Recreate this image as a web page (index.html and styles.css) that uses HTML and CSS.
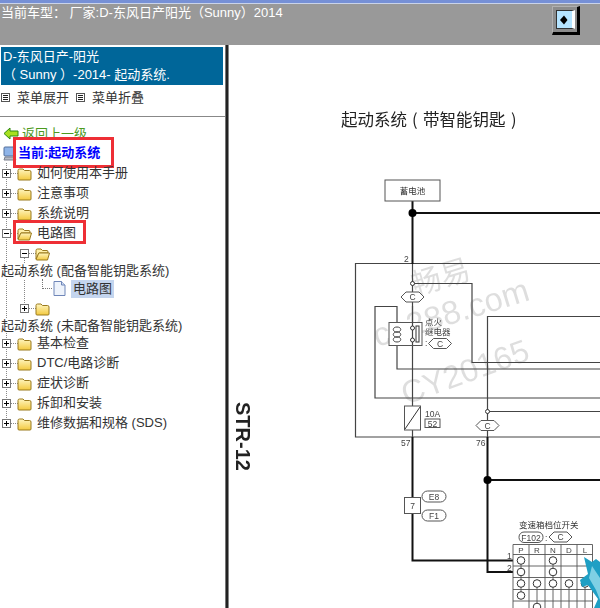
FILE: index.html
```html
<!DOCTYPE html>
<html lang="zh">
<head>
<meta charset="utf-8">
<title>起动系统</title>
<link rel="stylesheet" href="styles.css">
</head>
<body>
<svg class="defs" width="0" height="0" aria-hidden="true">
  <defs>
    <linearGradient id="fy" x1="0" y1="0" x2="0" y2="1"><stop offset="0" stop-color="#fff6c0"/><stop offset="1" stop-color="#f3c93f"/></linearGradient>
    <symbol id="closed" viewBox="0 0 15 14"><path d="M1 3.500 Q1 2 2.500 2 H6 L7.500 3.500 H12.500 Q14 3.500 14 5 V12 Q14 13 13 13 H2 Q1 13 1 12Z" fill="url(#fy)" stroke="#9a7a1e"/></symbol>
    <symbol id="open" viewBox="0 0 15 14"><path d="M1 3.500 Q1 2 2.500 2 H6 L7.500 3.500 H12 Q13 3.500 13 5 V6 H4 L1 12Z" fill="#fff0a8" stroke="#9a7a1e"/><path d="M1 12.500 L3.800 6 H14.500 L12.500 13 H2Z" fill="url(#fy)" stroke="#9a7a1e"/></symbol>
    <symbol id="plus" viewBox="0 0 9 9"><rect x=".5" y=".5" width="8" height="8" fill="#fff" stroke="#777"/><path d="M2 4.500H7M4.500 2V7" stroke="#000"/></symbol>
    <symbol id="minus" viewBox="0 0 9 9"><rect x=".5" y=".5" width="8" height="8" fill="#fff" stroke="#777"/><path d="M2 4.500H7" stroke="#000"/></symbol>
    <symbol id="menu" viewBox="0 0 9 9"><rect x=".5" y=".5" width="8" height="8" fill="#fff" stroke="#555"/><path d="M2 2.500H7M2 4.500H7M2 6.500H7" stroke="#222"/></symbol>
    <g id="hexc"><path d="M-11.500 0 L-6.500 -5 H6.500 L11.500 0 L6.500 5 H-6.500Z" fill="#fff" stroke="#555"/><text class="d-s" y="3.300" text-anchor="middle">C</text></g>
  </defs>
</svg>

<header class="topbar">
  <div class="strip"></div>
  <div class="topbar-body">
    <span class="car">当前车型： 厂家:D-东风日产阳光（Sunny）2014</span>
    <button class="toggle" type="button" aria-label="切换">
      <span class="toggle-face">
        <svg width="8" height="10" viewBox="0 0 8 10"><path d="M0 5 L4 .5 L7.500 5 L4 9.500Z" fill="#000"/></svg>
      </span>
    </button>
  </div>
</header>

<main class="main">
  <aside class="side">
    <div class="title">D-东风日产-阳光<br>（ Sunny ）-2014- 起动系统.</div>
    <div class="menu">
      <svg class="ico9"><use href="#menu"/></svg><span>菜单展开</span>
      <svg class="ico9"><use href="#menu"/></svg><span>菜单折叠</span>
    </div>
    <hr class="rule">
    <a class="back" href="#">
      <svg width="16" height="13" viewBox="0 0 16 13"><path d="M1 6.500 L7 1 V4 H15 V9 H7 V12Z" fill="#a8e020" stroke="#2e8a10"/></svg>
      <span>返回上一级</span>
    </a>
    <div class="current">
      <svg width="15" height="15" viewBox="0 0 15 15"><rect x="2" y="1" width="10" height="9" rx="1" fill="#8fb4e8" stroke="#55709c"/><path d="M3 11 H12 L14 14 H2Z" fill="#b8bcc6" stroke="#7a7f8c"/></svg>
      <b>当前:起动系统</b>
      <i class="mark mark-a"></i>
    </div>
    <ul class="tree">
      <li class="row"><svg class="ico9"><use href="#plus"/></svg><i class="dots"></i><svg class="folder"><use href="#closed"/></svg><span>如何使用本手册</span></li>
      <li class="row"><svg class="ico9"><use href="#plus"/></svg><i class="dots"></i><svg class="folder"><use href="#closed"/></svg><span>注意事项</span></li>
      <li class="row"><svg class="ico9"><use href="#plus"/></svg><i class="dots"></i><svg class="folder"><use href="#closed"/></svg><span>系统说明</span></li>
      <li class="row"><svg class="ico9"><use href="#minus"/></svg><i class="dots"></i><svg class="folder"><use href="#open"/></svg><span>电路图</span><i class="mark mark-b"></i></li>
      <li class="row lv1"><svg class="ico9"><use href="#minus"/></svg><i class="dots"></i><svg class="folder"><use href="#open"/></svg></li>
      <li class="text">起动系统 (配备智能钥匙系统)</li>
      <li class="row leaf">
        <i class="elbow"></i>
        <svg width="13" height="15" viewBox="0 0 13 15"><path d="M1 .500H8.500L12 4V14.500H1Z" fill="#eef3fb" stroke="#6f86b8"/><path d="M8.500 .500V4H12" fill="#cfdcf2" stroke="#6f86b8"/></svg>
        <span class="selected">电路图</span>
      </li>
      <li class="row lv1"><svg class="ico9"><use href="#plus"/></svg><i class="dots"></i><svg class="folder"><use href="#closed"/></svg></li>
      <li class="text short">起动系统 (未配备智能钥匙系统)</li>
      <li class="row"><svg class="ico9"><use href="#plus"/></svg><i class="dots"></i><svg class="folder"><use href="#closed"/></svg><span>基本检查</span></li>
      <li class="row"><svg class="ico9"><use href="#plus"/></svg><i class="dots"></i><svg class="folder"><use href="#closed"/></svg><span>DTC/电路诊断</span></li>
      <li class="row"><svg class="ico9"><use href="#plus"/></svg><i class="dots"></i><svg class="folder"><use href="#closed"/></svg><span>症状诊断</span></li>
      <li class="row"><svg class="ico9"><use href="#plus"/></svg><i class="dots"></i><svg class="folder"><use href="#closed"/></svg><span>拆卸和安装</span></li>
      <li class="row"><svg class="ico9"><use href="#plus"/></svg><i class="dots"></i><svg class="folder"><use href="#closed"/></svg><span>维修数据和规格 (SDS)</span></li>
    </ul>
  </aside>

  <div class="divider"></div>

  <section class="sheet">
    <svg class="diagram" width="371" height="563" viewBox="229 45 371 563">
      <text class="d-title" x="341" y="126">起动系统<tspan x="412">(</tspan><tspan x="423">带智能钥匙</tspan><tspan x="511">)</tspan></text>
      <text class="d-str" transform="translate(236 402) rotate(90)">STR-12</text>

      <g class="wm">
        <text class="wm-a" transform="translate(415 296) rotate(-17)">畅易</text>
        <text class="wm-b" transform="translate(377 347) rotate(-17)">cn288.com</text>
        <text class="wm-c" transform="translate(406 405) rotate(-20)">CY20165</text>
      </g>

      <g class="thin">
        <path d="M600 263.500H355.500V437H600"/>
        <path d="M412.500 264V406M412.500 430V437"/>
        <path d="M412.500 283.500H472V362.500H600"/>
        <path d="M600 398H375V306.500H397V369H600"/>
        <path d="M600 316.500H487.500V437"/>
        <path d="M487.500 411.500H600"/>
      </g>
      <g class="thick">
        <path d="M412.500 201V264M412.500 213H600"/>
        <path d="M412.500 437V560.500H513"/>
        <path d="M487.500 437V572H513"/>
        <path d="M487.500 480H600"/>
      </g>
      <circle cx="412.500" cy="213" r="4" fill="#000"/>
      <circle cx="487.500" cy="480" r="4" fill="#000"/>

      <rect class="box" x="385" y="180" width="55" height="21"/>
      <text class="d-m" x="412.500" y="194" text-anchor="middle">蓄电池</text>
      <text class="d-s" x="404" y="262">2</text>

      <circle class="node" cx="412.500" cy="283.500" r="2"/>
      <use href="#hexc" x="412.500" y="297"/>

      <rect class="box" x="389" y="322.500" width="33" height="23"/>
      <path d="M397 327c5 0 5 5 0 5c5 0 5 5 0 5c5 0 5 5 0 5c-5 0-5-5 0-5c-5 0-5-5 0-5c-5 0-5-5 0-5" fill="none" stroke="#444"/>
      <path class="thin" d="M412.500 306V345"/>
      <circle class="node" cx="412.500" cy="328" r="2"/>
      <circle class="node" cx="412.500" cy="340" r="2"/>
      <rect x="416" y="326" width="3" height="16" fill="#fff" stroke="#333"/>
      <text class="d-s" x="425" y="325">点火</text>
      <text class="d-s" x="425" y="335">继电器</text>
      <text class="d-s" x="425" y="346">:</text>
      <use href="#hexc" x="440" y="343.500"/>

      <rect class="box" x="404.500" y="406" width="16" height="24"/>
      <path d="M405 429L420 407" stroke="#333" fill="none"/>
      <text class="d-s" x="425" y="417">10A</text>
      <rect class="box" x="425" y="419" width="15" height="8.500"/>
      <text class="d-s" x="432.500" y="426.500" text-anchor="middle">52</text>
      <circle class="node" cx="487.500" cy="411.500" r="2"/>
      <use href="#hexc" x="487.500" y="425.500"/>
      <text class="d-s" x="401" y="446">57</text>
      <text class="d-s" x="476" y="446">76</text>

      <rect class="box" x="404.500" y="497.500" width="16" height="16"/>
      <text class="d-s" x="412.500" y="509" text-anchor="middle">7</text>
      <rect class="box" x="422" y="491" width="24" height="11" rx="5.500"/>
      <text class="d-s" x="434" y="500" text-anchor="middle">E8</text>
      <rect class="box" x="422" y="510" width="24" height="11" rx="5.500"/>
      <text class="d-s" x="434" y="519" text-anchor="middle">F1</text>

      <text class="d-m" x="519" y="528">变速箱档位开关</text>
      <rect class="box" x="519" y="532" width="24" height="10.500" rx="5"/>
      <text class="d-s" x="531" y="541" text-anchor="middle">F102</text>
      <text class="d-s" x="545" y="541">:</text>
      <use href="#hexc" x="560.500" y="537"/>

      <text class="d-s" x="507" y="559">1</text>
      <text class="d-s" x="507" y="571">2</text>

      <g class="grid">
        <path d="M513 608V544.500H592.500V608M529 544.500V608M545 544.500V608M561 544.500V608M577 544.500V608"/>
        <path d="M513 554.500H592.500M513 566H592.500M513 577.500H592.500M513 589.500H592.500M513 601H592.500"/>
        <path d="M521 560V595M553 560V584M537 584V608M569 584V608M585 584V608M553 584V608"/>
      </g>
      <g class="cols">
        <text x="521" y="553">P</text><text x="537" y="553">R</text><text x="553" y="553">N</text><text x="569" y="553">D</text><text x="585" y="553">L</text>
      </g>
      <g>
        <circle class="pin" cx="521" cy="560.500" r="3.800"/><circle class="pin" cx="553" cy="560.500" r="3.800"/>
        <circle class="pin" cx="521" cy="572" r="3.800"/><circle class="pin" cx="553" cy="572" r="3.800"/>
        <circle class="pin" cx="521" cy="583.500" r="3.800"/><circle class="pin" cx="537" cy="583.500" r="3.800"/><circle class="pin" cx="553" cy="583.500" r="3.800"/><circle class="pin" cx="569" cy="583.500" r="3.800"/><circle class="pin" cx="585" cy="583.500" r="3.800"/>
        <circle class="pin" cx="521" cy="595.500" r="3.800"/><circle class="pin" cx="537" cy="607" r="3.800"/>
      </g>

      <path d="M584 557 L592 562 L596 559 L600 562 V608 H594 L598 599 L588 585 L582 587 L580 580 L588 574 Z" fill="#1f9fc4"/>
      <path d="M592 566 L600 578 V600 L596 590 L589 578Z" fill="#7fd0e4"/>
    </svg>
  </section>
</main>
</body>
</html>
```

FILE: styles.css
```css
* { box-sizing: border-box; }
html, body { margin: 0; padding: 0; }
body {
  width: 600px;
  height: 608px;
  overflow: hidden;
  background: #fff;
  font: 13px/1.2 "Liberation Sans", "Noto Sans CJK SC", sans-serif;
  color: #333;
}
.defs { position: absolute; }

.topbar { height: 45px; background: #999; display: flex; flex-direction: column; }
.strip { height: 4px; background: #7690d6; border-bottom: 1px solid #c9d3ea; flex: none; }
.topbar-body { flex: 1; display: flex; align-items: flex-start; justify-content: space-between; padding-right: 20px; }
.car { color: #fff; line-height: 18px; margin: 0 0 0 1px; }
.toggle {
  width: 28px; height: 29px; margin-top: 2px; padding: 0;
  background: #8c8c8c;
  border-style: solid; border-width: 1px 3px 3px 1px;
  border-color: #b0b0b0 #000 #000 #b0b0b0;
  display: flex; align-items: center; justify-content: center;
}
.toggle-face {
  width: 19px; height: 19px; background: #b5e4ff;
  border: 1px solid #333; border-right: 3px solid #fff; outline: none;
  display: flex; align-items: center; justify-content: center;
}

.main { display: flex; height: 563px; }
.side { width: 225px; flex: none; padding-top: 2px; overflow: hidden; }
.divider { width: 4px; flex: none; background: #222; border-left: 1px solid #777; border-right: 1px solid #888; }
.sheet { flex: 1; overflow: hidden; }

.title {
  margin-left: 1px; width: 222px; height: 38px;
  background: #006699; color: #fff;
  padding: 1px 2px; line-height: 18px;
}
.menu { display: flex; align-items: center; height: 25px; padding-left: 1px; }
.menu span { margin: 0 7px; }
.ico9 { width: 9px; height: 9px; flex: none; }
.rule { margin: 6px 0 0; height: 1px; border: 0; background: #888; }

.back { display: flex; align-items: center; height: 19px; margin-top: 7px; padding-left: 3px; color: #4c9a1e; }
.back span { margin-left: 3px; text-decoration: underline; }
.current { position: relative; display: flex; align-items: center; height: 20px; padding-left: 2px; color: #00f; }
.current b { margin-left: 1px; font-weight: 700; }

.mark { position: absolute; border: 3px solid #ee2f35; pointer-events: none; }
.mark-a { left: 13px; top: -6px; width: 101px; height: 31px; }
.mark-b { left: 13px; top: -3px; width: 73px; height: 24px; }

.tree {
  list-style: none; margin: 0; padding: 0; position: relative;
  background:
    repeating-linear-gradient(#888 0 1px, transparent 1px 2px) 6px 0 / 1px 258px no-repeat,
    repeating-linear-gradient(#888 0 1px, transparent 1px 2px) 24px 95px / 1px 46px no-repeat;
}
.row { position: relative; display: flex; align-items: center; height: 20px; padding-left: 2px; }
.row span { margin-left: 5px; }
.dots { width: 7px; height: 1px; flex: none; background: repeating-linear-gradient(90deg, #888 0 1px, transparent 1px 2px); }
.folder { width: 15px; height: 14px; flex: none; margin-left: -1px; margin-top: 2px; }
.lv1 { padding-left: 20px; }
.text { height: 16px; line-height: 16px; padding-left: 1px; background: #fff; position: relative; }
.text.short { height: 15px; line-height: 15px; }
.leaf { height: 19px; padding-left: 53px; }
.leaf span { margin-left: 5px; }
.elbow {
  position: absolute; left: 42px; top: 0; width: 10px; height: 10px;
  border-left: 1px dotted #777; border-bottom: 1px dotted #777;
}
.selected { background: #c4d5ee; padding: 0 2px; line-height: 18px; }

.diagram { display: block; filter: blur(.35px); }
.d-title { font: 16.500px "Noto Sans CJK SC", sans-serif; fill: #222; }
.d-str { font: 700 20px "Liberation Sans", sans-serif; fill: #222; }
.d-m { font: 8.500px "Noto Sans CJK SC", sans-serif; fill: #333; }
.d-s { font: 8.500px "Liberation Sans", "Noto Sans CJK SC", sans-serif; fill: #444; }
.wm text { fill: #000; opacity: .13; font-family: "Liberation Sans", "Noto Sans CJK SC", sans-serif; }
.wm-a { font-size: 30px; }
.wm-b { font-size: 33px; }
.wm-c { font-size: 32px; }
.thin path, path.thin { fill: none; stroke: #444; stroke-width: 1.200; }
.thick path { fill: none; stroke: #111; stroke-width: 2; }
.box { fill: #fff; stroke: #555; stroke-width: 1; }
.node { fill: #fff; stroke: #333; stroke-width: 1; }
.pin { fill: #fff; stroke: #333; stroke-width: 1; }
.grid path { fill: none; stroke: #555; stroke-width: .9; }
.cols text { font: 8px "Liberation Sans", sans-serif; fill: #444; text-anchor: middle; }
```
